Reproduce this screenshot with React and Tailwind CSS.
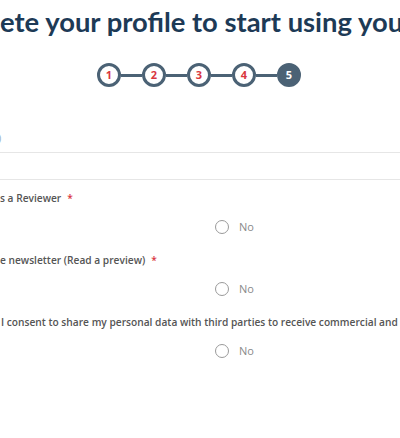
import React from 'react';

const steps = [1, 2, 3, 4, 5];

const Step = ({ n, active }) => (
  <div
    className={`flex items-center justify-center w-[24px] h-[24px] rounded-full border-[3px] border-[#4b6275] text-[11px] font-bold ${
      active ? 'bg-[#4b6275] text-white' : 'bg-white text-[#d9363e]'
    }`}
  >
    {n}
  </div>
);

const Radio = () => (
  <div className="flex items-center ml-[215px] h-[14px]">
    <span className="w-[14px] h-[14px] rounded-full border-[1.5px] border-[#9a9a9a] bg-white" />
    <span className="ml-[10px] text-[11px] text-[#8a8a8a]">No</span>
  </div>
);

// text that begins left of the window: the head sits right-aligned in a box that ends at x=0
const Cut = ({ head }) => (
  <span className="inline-block w-[300px] ml-[-300px] text-right">{head}</span>
);

const Label = ({ head, children }) => (
  <p className="whitespace-nowrap text-[10.2px] font-semibold text-[#555] leading-[16px]">
    {head && <Cut head={head} />}
    {children}
    <span className="ml-[6px] text-[#d9363e]">*</span>
  </p>
);

export default function App() {
  return (
    <div
      className="w-[400px] h-[438px] overflow-hidden bg-white"
      style={{ fontFamily: '"Open Sans", sans-serif' }}
    >
      <h1
        className="mt-[4px] h-[36px] text-[27.4px] leading-[36px] font-bold text-[#1d3a56] whitespace-nowrap"
        style={{ fontFamily: 'Lato, sans-serif' }}
      >
        <Cut head="Compl" />
        ete your profile to start using your account
      </h1>
      <div className="w-[1000px] ml-[-301px] mt-[23px] flex items-center justify-center">
        {steps.map((n, i) => (
          <React.Fragment key={n}>
            {i > 0 && <div className="w-[21px] h-[3px] bg-[#4b6275]" />}
            <Step n={n} active={n === 5} />
          </React.Fragment>
        ))}
      </div>

      <div className="mt-[44px] h-[14px] text-[11px] leading-[14px] text-[#9bb3c7] ml-[-2px]">)</div>
      <div className="mt-[7px] border-t border-[#e6e6e6]" />
      <div className="mt-[26px] border-t border-[#e6e6e6]" />

      <div className="mt-[10px]">
        <Label head="Register a">s a Reviewer</Label>
        <div className="mt-[14px]">
          <Radio />
        </div>
        <div className="mt-[18px]">
          <Label head="Subscribe to th">e newsletter (Read a preview)</Label>
        </div>
        <div className="mt-[14px]">
          <Radio />
        </div>
        <div className="mt-[18px] ml-[1px]">
          <Label>
            I consent to share my personal data with third parties to receive commercial and marketing communications
          </Label>
        </div>
        <div className="mt-[14px]">
          <Radio />
        </div>
      </div>
    </div>
  );
}
